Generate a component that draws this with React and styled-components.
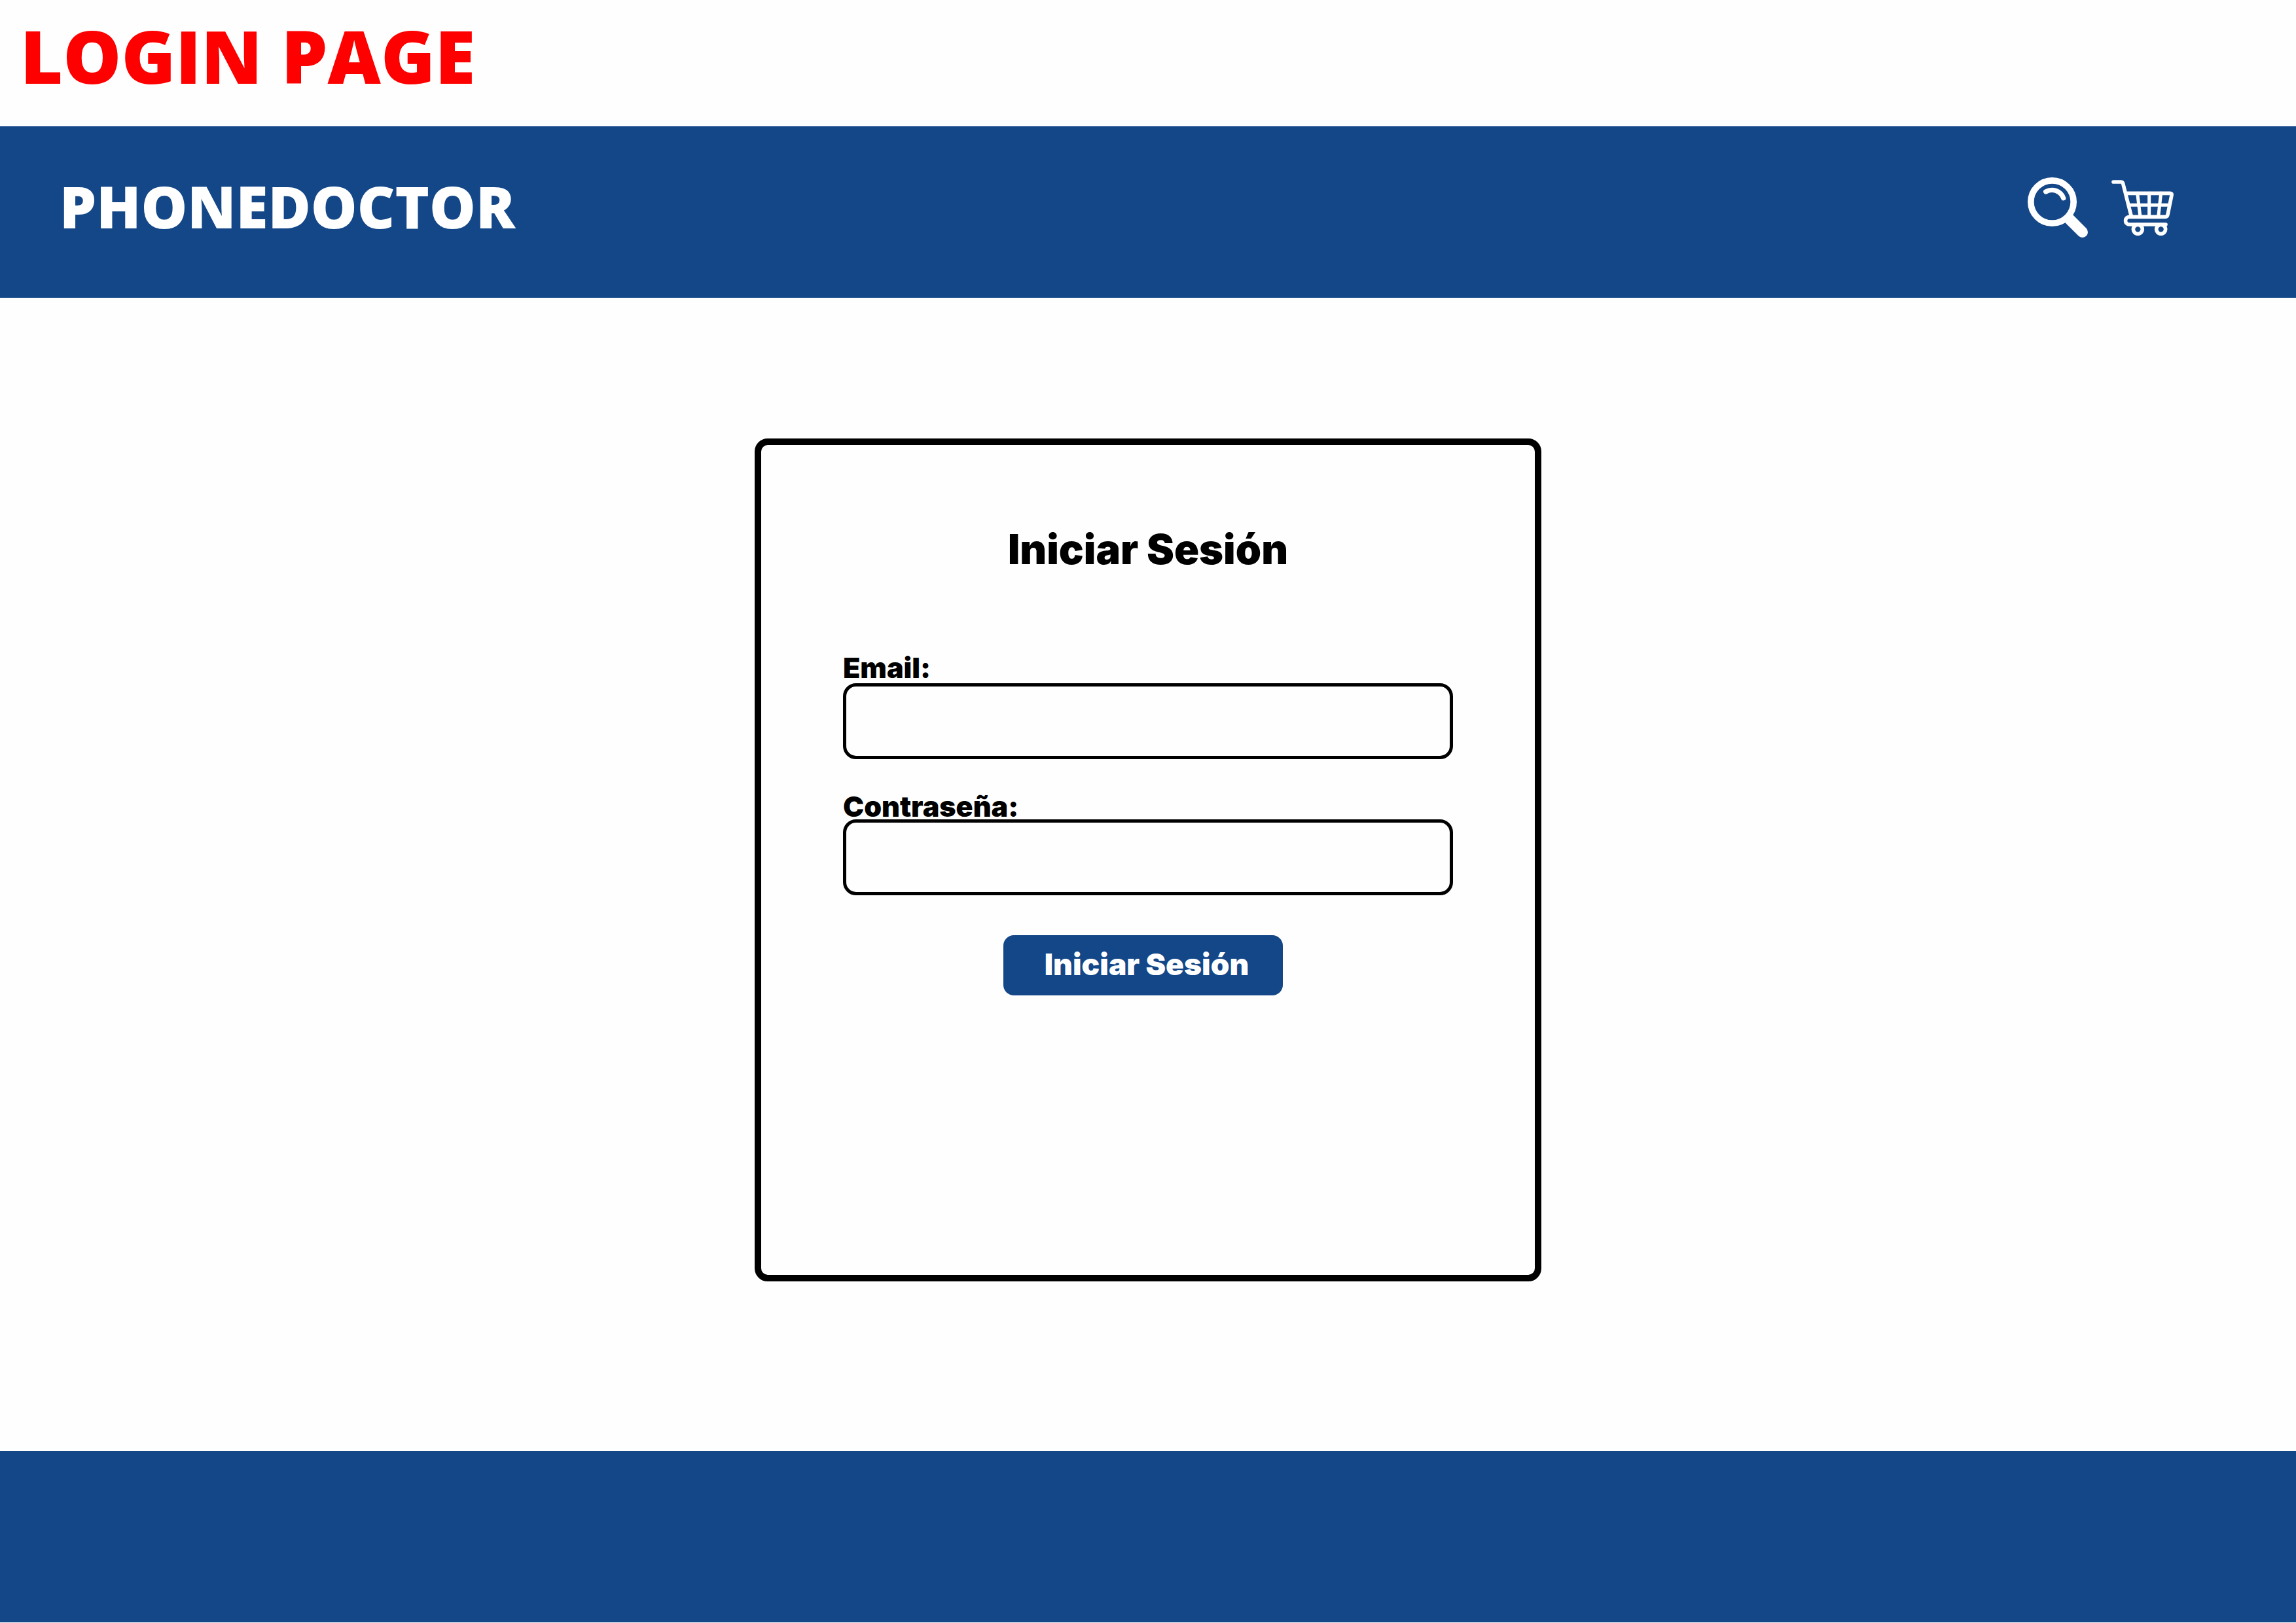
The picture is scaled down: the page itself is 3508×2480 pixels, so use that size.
import React from "react";
import styled, { createGlobalStyle } from "styled-components";

const blue = "#144788";
const displayFont = `"Open Sans", "Noto Sans", sans-serif`;
const bodyFont = `Inter, "Liberation Sans", sans-serif`;

const GlobalStyle = createGlobalStyle`
  *, *::before, *::after { box-sizing: border-box; }
  body { margin: 0; background: #fefefe; color: #000; font-family: ${bodyFont}; }
`;

const Page = styled.div`
  display: flex;
  flex-direction: column;
`;

const PageTitle = styled.h1`
  margin: 0;
  padding: 25px 31px 48px;
  color: #ff0000;
  font: 800 112px/120px ${displayFont};
`;

const Header = styled.header`
  display: flex;
  align-items: center;
  justify-content: space-between;
  min-height: 262px;
  padding: 0 187px 14px 91px;
  background: ${blue};
`;

const Brand = styled.a`
  padding-bottom: 4px;
  color: #fff;
  font: 800 89px/96px ${displayFont};
  text-decoration: none;
`;

const Actions = styled.nav`
  display: flex;
  align-items: center;
  gap: 36px;
`;

const IconButton = styled.button`
  display: flex;
  padding: 0;
  border: 0;
  background: none;
  color: #fff;
  cursor: pointer;
`;

const Icon = styled.svg`
  display: block;
  width: ${(p) => p.$width}px;
  fill: none;
  stroke: currentColor;
  stroke-linecap: round;
  stroke-linejoin: round;
`;

const Main = styled.main`
  display: flex;
  justify-content: center;
  padding: 215px 24px 259px;
`;

const Card = styled.form`
  display: flex;
  flex-direction: column;
  width: 100%;
  max-width: 1202px;
  min-height: 1288px;
  padding: 127px 125px;
  border: 10px solid #000;
  border-radius: 20px;
`;

const Heading = styled.h2`
  margin: 0 0 129px;
  font-size: 63px;
  font-weight: 900;
  line-height: 64px;
  text-align: center;
`;

const Fields = styled.div`
  display: flex;
  flex-direction: column;
  gap: 52px;
`;

const Field = styled.div`
  display: flex;
  flex-direction: column;
  align-items: flex-start;
  gap: ${(p) => p.$gap}px;
`;

const Label = styled.label`
  font-size: 43px;
  font-weight: 900;
  line-height: 40px;
`;

const Input = styled.input`
  width: 100%;
  height: 116px;
  padding: 0 24px;
  border: 5px solid #000;
  border-radius: 20px;
  background: transparent;
  color: #000;
  font: 500 43px/48px ${bodyFont};
`;

const SubmitRow = styled.div`
  display: flex;
  justify-content: center;
  padding: 61px 16px 0 0;
`;

const SubmitButton = styled.button`
  width: 427px;
  height: 92px;
  padding: 0 0 4px 12px;
  border: 0;
  border-radius: 16px;
  background: ${blue};
  color: #fff;
  font: 900 46px/48px ${bodyFont};
  white-space: nowrap;
  cursor: pointer;
`;

const Footer = styled.footer`
  min-height: 262px;
  background: ${blue};
`;

function SearchIcon() {
  return (
    <Icon $width={92} viewBox="0 0 276 276" aria-hidden="true">
      <circle cx="112.5" cy="112.5" r="98" strokeWidth="29" />
      <path d="M83 66A56 56 0 0 1 164 95" strokeWidth="22" />
      <path d="M192 192L251 251" strokeWidth="50" />
    </Icon>
  );
}

function CartIcon() {
  return (
    <Icon $width={95} viewBox="0 0 285 255" strokeWidth="17" aria-hidden="true">
      <path d="M9 9H44Q51 9 53 16L91 166" />
      <path d="M68 61H269Q278 61 276 70L258 159Q256 169 246 169H82A17.5 17.5 0 0 0 82 204H249" />
      <path d="M82 115H262M119 61L132 169M173 61V169M227 61L215 169" strokeWidth="15" />
      <circle cx="121" cy="226" r="21" />
      <circle cx="227" cy="226" r="21" />
    </Icon>
  );
}

export default function App() {
  return (
    <Page>
      <GlobalStyle />
      <PageTitle>LOGIN PAGE</PageTitle>
      <Header>
        <Brand href="#">PHONEDOCTOR</Brand>
        <Actions>
          <IconButton type="button" aria-label="Buscar">
            <SearchIcon />
          </IconButton>
          <IconButton type="button" aria-label="Carrito">
            <CartIcon />
          </IconButton>
        </Actions>
      </Header>
      <Main>
        <Card onSubmit={(event) => event.preventDefault()}>
          <Heading>Iniciar Sesión</Heading>
          <Fields>
            <Field $gap={4}>
              <Label htmlFor="email">Email:</Label>
              <Input id="email" type="email" autoComplete="email" />
            </Field>
            <Field $gap={0}>
              <Label htmlFor="password">Contraseña:</Label>
              <Input id="password" type="password" autoComplete="current-password" />
            </Field>
          </Fields>
          <SubmitRow>
            <SubmitButton type="submit">Iniciar Sesión</SubmitButton>
          </SubmitRow>
        </Card>
      </Main>
      <Footer />
    </Page>
  );
}
